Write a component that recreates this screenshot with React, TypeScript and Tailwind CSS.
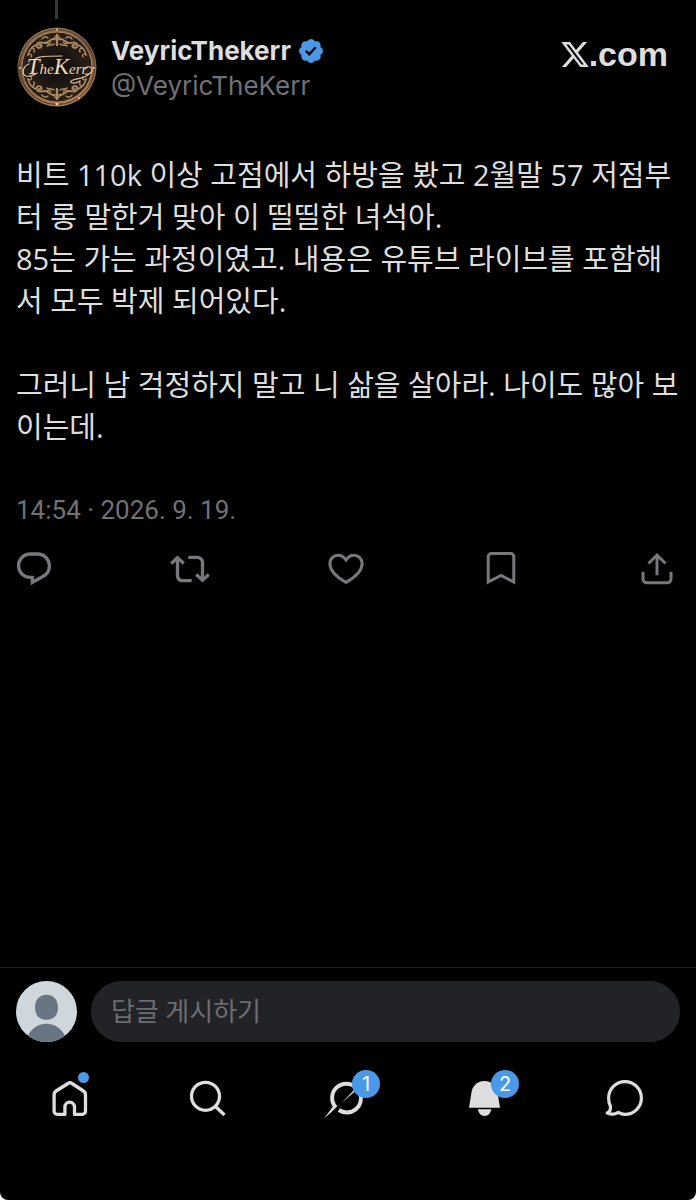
import type { ReactNode } from "react"

const postText = `비트 110k 이상 고점에서 하방을 봤고 2월말 57 저점부터 롱 말한거 맞아 이 띨띨한 녀석아.
85는 가는 과정이였고. 내용은 유튜브 라이브를 포함해서 모두 박제 되어있다.

그러니 남 걱정하지 말고 니 삶을 살아라. 나이도 많아 보이는데.`

interface IconButtonProps {
  label: string;
  children: ReactNode;
}

const ActionButton: React.FC<IconButtonProps> = ({ label, children }) => {
  return (
    <button type="button" aria-label={label} className="w-10 h-10">
      {children}
    </button>
  )
}

const NavButton: React.FC<IconButtonProps & { badge?: string; dot?: boolean }> = ({
  label,
  badge,
  dot,
  children,
}) => {
  return (
    <button type="button" aria-label={label} className="flex justify-center">
      <span className="relative block w-12 h-12">
        {children}
        {badge && (
          <span className="absolute left-7 -top-1 w-7 h-7 rounded-full bg-[#4a99e9] text-white text-[20px] leading-7 text-center">{badge}</span>
        )}
        {dot && <span className="absolute left-8 -top-0.5 w-[11px] h-[11px] rounded-full bg-[#4a99e9]" />}
      </span>
    </button>
  )
}

// one quarter of the filigree, mirrored for the other three
const Scroll = () => (
  <g fill="none" stroke="#b08a62" strokeLinecap="round">
    <path strokeWidth="1.8" d="M38 12c-5-1-6 4-10 4s-6-2-8 1 2 5 4 3-1-3-2-2" />
    <path strokeWidth="1.5" d="M37 17c-2 2-5 0-7 2M19 18c-5 2-7 5-8 10M31 11c-2-2-5-1-6 1M15 21c2 0 3 2 2 4" />
    <path strokeWidth="2.2" d="M40 8v10" />
    <path strokeWidth="1.2" d="M40 8c-2 2-4 3-3 5M11 28c2-2 5 0 3 2M34 15c-1 2-3 2-4 1" />
  </g>
)

const Avatar = () => {
  return (
    <svg viewBox="0 0 80 80" className="w-20 h-20 shrink-0" role="img" aria-label="TheKerr">
      <defs>
        <linearGradient id="rim" x1="0" y1="0" x2="0.4" y2="1">
          <stop offset="0" stopColor="#a48561" />
          <stop offset="0.5" stopColor="#70543b" />
          <stop offset="1" stopColor="#a8794d" />
        </linearGradient>
        <radialGradient id="face">
          <stop offset="0" stopColor="#100d0c" />
          <stop offset="1" stopColor="#2a2019" />
        </radialGradient>
      </defs>
      <circle cx="40" cy="40" r="39.5" fill="url(#rim)" />
      <circle cx="40" cy="40" r="37.5" fill="none" stroke="#4b3626" strokeWidth="1" />
      <circle cx="40" cy="40" r="35" fill="url(#face)" stroke="#a8845f" strokeWidth="1" />
      <Scroll />
      <g transform="translate(80 0) scale(-1 1)"><Scroll /></g>
      <g transform="translate(0 80) scale(1 -1)"><Scroll /></g>
      <g transform="translate(80 80) scale(-1 -1)"><Scroll /></g>
      <g fill="none" stroke="#e3c6a2" strokeWidth="1.2" strokeLinecap="round">
        <path d="M17 33c3-4 13-4 28-4M12 37c-6 2-8 10-3 12 4 1 8-1 11-3" />
        <path d="M68 47c5 1 8-2 7-5s-6-3-7 0M74 45c-3 6-12 6-18 8s1 5 7 1" />
      </g>
      <text x="40" y="47" textAnchor="middle" fill="#edd7b9" className="font-['Liberation_Serif',serif] italic text-[15px]">
        <tspan className="text-[23px]">T</tspan>he<tspan className="text-[23px]">K</tspan>err
      </text>
      <g fill="#f2c28d">
        <circle cx="40" cy="2.5" r="1" />
        <circle cx="40" cy="77" r="1.5" />
        <circle cx="3" cy="41" r="1" />
        <circle cx="77" cy="41" r="1" />
        <circle cx="62" cy="71" r="1" />
      </g>
    </svg>
  )
}

const PostHeader = () => {
  return (
    <header className="flex mt-2 pl-[17px] pr-7">
      <Avatar />
      <div className="ml-3.5 mt-[5px]">
        <div className="flex items-center">
          <a href="#profile" className="font-bold text-[26px] leading-[38px]">VeyricThekerr</a>
          <svg viewBox="0 0 24 24" className="w-7 h-7 ml-1.5" role="img" aria-label="인증된 계정">
            <path fill="#4a99e9" d="M22.25 12c0-1.43-.88-2.67-2.19-3.34.46-1.39.2-2.9-.81-3.91s-2.52-1.27-3.91-.81c-.66-1.31-1.91-2.19-3.34-2.19s-2.67.88-3.33 2.19c-1.4-.46-2.91-.2-3.92.81s-1.26 2.52-.8 3.91c-1.31.67-2.2 1.91-2.2 3.34s.89 2.67 2.2 3.34c-.46 1.39-.21 2.9.8 3.91s2.52 1.26 3.91.81c.67 1.31 1.91 2.19 3.34 2.19s2.68-.88 3.34-2.19c1.39.45 2.9.2 3.91-.81s1.27-2.52.81-3.91c1.31-.67 2.19-1.91 2.19-3.34zm-11.71 4.2L6.8 12.46l1.41-1.42 2.26 2.26 4.8-5.23 1.47 1.36-6.2 6.77z" />
          </svg>
        </div>
        <div className="text-[26px] leading-8 text-[#717176]">@VeyricTheKerr</div>
      </div>
      <div className="flex items-center h-10 mt-[7px] ml-auto">
        <svg viewBox="1 2 22 20" className="w-7 h-[27px]" role="img" aria-label="X">
          <path fill="currentColor" d="M18.244 2.25h3.308l-7.227 8.26 8.502 11.24H16.17l-5.214-6.817L4.99 21.75H1.68l7.73-8.835L1.254 2.25H8.08l4.713 6.231zm-1.161 17.52h1.833L7.084 4.126H5.117z" />
        </svg>
        <span className="font-['Liberation_Sans',sans-serif] font-bold text-[34px] leading-10">.com</span>
      </div>
    </header>
  )
}

const PostActions = () => {
  return (
    <div className="flex justify-between mt-[23px] pl-3.5 pr-[19px] text-[#77777c]">
      <ActionButton label="답글">
        <svg viewBox="0 0 24 24" fill="currentColor">
          <path d="M1.751 10c0-4.42 3.584-8 8.005-8h4.366c4.49 0 8.129 3.64 8.129 8.13 0 2.96-1.607 5.68-4.196 7.11l-8.054 4.46v-3.69h-.067c-4.49.1-8.183-3.51-8.183-8.01zm8.005-6c-3.317 0-6.005 2.69-6.005 6 0 3.37 2.77 6.08 6.138 6.01l.351-.01h1.761v2.3l5.087-2.81c1.951-1.08 3.163-3.13 3.163-5.36 0-3.39-2.744-6.13-6.129-6.13H9.756z" />
        </svg>
      </ActionButton>
      <ActionButton label="재게시">
        <svg viewBox="0 0 24 24" fill="currentColor">
          <path d="M4.5 3.88l4.432 4.14-1.364 1.46L5.5 7.55V16c0 1.1.896 2 2 2H13v2H7.5c-2.209 0-4-1.79-4-4V7.55L1.432 9.48.068 8.02 4.5 3.88zM16.5 6H11V4h5.5c2.209 0 4 1.79 4 4v8.45l2.068-1.93 1.364 1.46-4.432 4.14-4.432-4.14 1.364-1.46 2.068 1.93V8c0-1.1-.896-2-2-2z" />
        </svg>
      </ActionButton>
      <ActionButton label="마음에 들어요">
        <svg viewBox="0 0 40 40" fill="none" stroke="currentColor" strokeWidth="3">
          <path d="M20 11C17.5 7.5 14.5 6.2 12 6.2C7.5 6.2 3.9 9.8 3.9 14.6C3.9 22.5 11 28.5 20 33.4C29 28.5 36.1 22.5 36.1 14.6C36.1 9.8 32.5 6.2 28 6.2C25.5 6.2 22.5 7.5 20 11Z" />
        </svg>
      </ActionButton>
      <ActionButton label="북마크">
        <svg viewBox="0 0 40 40" fill="none" stroke="currentColor" strokeWidth="3">
          <path d="M7.2 33V7.6a3 3 0 0 1 3-3h19.6a3 3 0 0 1 3 3V33L20 26.5z" />
        </svg>
      </ActionButton>
      <ActionButton label="공유">
        <svg viewBox="0 0 40 40" fill="none" stroke="currentColor" strokeWidth="3">
          <path d="M6 22.7v7.3a3.8 3.8 0 0 0 3.8 3.8h20.4a3.8 3.8 0 0 0 3.8-3.8v-7.3M20 26.3V6.5M11.5 14.5L20 6l8.5 8.5" />
        </svg>
      </ActionButton>
    </div>
  )
}

const ReplyBar = () => {
  return (
    <form className="flex items-center gap-3.5 pt-[13px] px-4 border-t border-[#1f2023]">
      <svg viewBox="0 0 60 60" className="w-[61px] h-[61px] rounded-full shrink-0" aria-hidden="true">
        <rect width="60" height="60" fill="#cfd7dd" />
        <path fill="#687683" d="M30 13.5c7.5 0 11.3 5.5 11.3 12.5s-3.3 12-11.3 12-11.3-5-11.3-12S22.5 13.5 30 13.5zM30 42c9 0 16 5.5 19 14v6H11v-6c3-8.5 10-14 19-14z" />
      </svg>
      <input
        type="text"
        aria-label="답글 게시하기"
        placeholder="답글 게시하기"
        className="min-w-0 flex-1 h-[61px] rounded-full bg-[#222326] px-5 font-[Roboto,'Noto_Sans_CJK_KR',sans-serif] text-[26px] placeholder:text-[#6c6d72] outline-none"
      />
    </form>
  )
}

const BottomNav = () => {
  return (
    <nav className="grid grid-cols-5 mt-8 mb-[78px]">
      <NavButton label="홈" dot>
        <svg viewBox="0 0 48 48" fill="none" stroke="currentColor" strokeWidth="3.3" strokeLinejoin="round">
          <path d="M22 9.5Q24 8 26 9.5L37.5 17Q39.5 18.3 39.5 21V37a3.4 3.4 0 0 1-3.4 3.4H28.5V33a4.8 4.8 0 0 0-9.6 0V40.4H11.5A3.4 3.4 0 0 1 8.1 37V21Q8.1 18.3 10.1 17Z" />
        </svg>
      </NavButton>
      <NavButton label="검색">
        <svg viewBox="0 0 48 48" fill="none" stroke="currentColor" strokeWidth="3.3">
          <circle cx="20.5" cy="22.3" r="14" />
          <path d="M30 32l9.500 9" />
        </svg>
      </NavButton>
      <NavButton label="Grok" badge="1">
        <svg viewBox="0 0 48 48">
          <path fill="none" stroke="currentColor" strokeWidth="4" d="M11.6 33.2A14.2 14.2 0 0 1 32 13.5M14.8 36A14.2 14.2 0 0 0 36 19" />
          <path fill="currentColor" d="M0 44.5Q5 38 8.5 33L13.800 31.700Q8 38 0 44.500ZM17 29.500L30 16L36 13Z" />
        </svg>
      </NavButton>
      <NavButton label="알림" badge="2">
        <svg viewBox="0 0 48 48" fill="currentColor">
          <path d="M21.5 7C29 7 34 12.5 34.7 19.5L37 33.7H6L8.3 19.5C9 12.5 14 7 21.5 7ZM14.8 35.3H28.4C27.5 39.5 25 42 21.6 42S15.7 39.5 14.8 35.3Z" />
        </svg>
      </NavButton>
      <NavButton label="쪽지">
        <svg viewBox="0 0 48 48" fill="none" stroke="currentColor" strokeWidth="3.2" strokeLinejoin="round">
          <path d="M5.2 39C8 37.5 9 35 8.3 31.8C7.2 29.6 6.6 26.9 6.6 24A16.4 16.4 0 1 1 23 40.4C20.6 40.4 18.3 39.6 16.3 38.4C13 40.5 9 40.7 5.2 39Z" />
        </svg>
      </NavButton>
    </nav>
  )
}

export default function App() {
  return (
    <div className="bg-white font-[Inter,'Noto_Sans_CJK_KR',sans-serif]">
      <div className="flex flex-col min-h-screen bg-black text-[#dedede] rounded-b-lg">
        <main className="flex-1">
          <article>
            <div className="w-[3px] h-[19px] ml-[55px] bg-[#36373b]" />
            <PostHeader />
            <p lang="ko" className="mt-[47px] pl-4 pr-3 font-['Open_Sans','Noto_Sans_CJK_KR',sans-serif] text-[29px] leading-[42px] whitespace-pre-line">{postText}</p>
            <div className="mt-[46px] px-4 font-[Roboto,sans-serif] text-[26px] leading-8 text-[#717176]">
              <time dateTime="2026-09-19T14:54">14:54 · 2026. 9. 19.</time>
            </div>
            <PostActions />
          </article>
        </main>
        <footer>
          <ReplyBar />
          <BottomNav />
        </footer>
      </div>
    </div>
  )
}
